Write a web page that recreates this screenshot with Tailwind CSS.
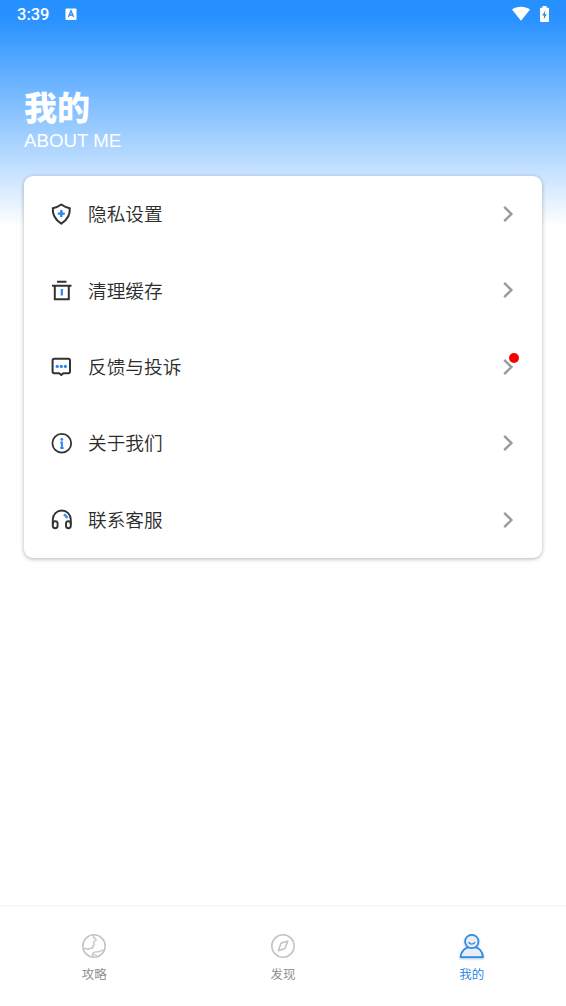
<!DOCTYPE html>
<html lang="zh-CN">
<head>
<meta charset="utf-8">
<title>我的</title>
<script src="https://cdn.jsdelivr.net/npm/@tailwindcss/browser@4"></script>
</head>
<body class="bg-white">
<div class="flex h-[1006px] w-[566px] flex-col overflow-hidden bg-[linear-gradient(to_bottom,#248fff_0px,#2a92ff_20px,#ffffff_227px)] font-['Noto_Sans_CJK_SC',sans-serif]">
  <header class="flex h-[30px] shrink-0 items-center pr-4 pl-[17px] text-white">
    <span class="w-12 font-[Roboto,sans-serif] text-[16.5px] leading-[30px] font-medium">3:39</span>
    <svg class="mb-0.5" width="12" height="12" viewBox="0 0 12 12"><rect x=".5" y=".5" width="11" height="11.5" rx="1" fill="#fff"/><path d="M3.4 9 6 2.8 8.6 9M4.3 7h3.4" fill="none" stroke="#2d8bea" stroke-width="1.3"/></svg>
    <svg class="mr-2 mb-1 ml-auto" width="20" height="16" viewBox="0 0 20 16"><path d="M1 4.5C6 .9 14 .9 19 4.5L10 15.8Z" fill="#fff"/></svg>
    <svg class="mb-0.5" width="11" height="16" viewBox="0 0 11 16"><path d="M3.5 0h4v1.8H9q1 0 1 1V15q0 1-1 1H2q-1 0-1-1V2.800q0-1 1-1h1.500Z" fill="#fff"/><path d="M6.300 4.500 3.200 9.500h2L4.700 13.500 7.900 8.300h-2Z" fill="#2d8bea"/></svg>
  </header>
  <div class="flex h-[146px] shrink-0 flex-col px-6 pt-[57px] text-white">
    <h1 class="h-[41px] text-[33px] leading-[38px] font-black">我的</h1>
    <p class="font-['Liberation_Sans',sans-serif] text-[18.7px] leading-[25px]">ABOUT ME</p>
  </div>
  <main class="mx-6 flex h-[382px] shrink-0 flex-col rounded-[9px] bg-white text-[18.700px] font-[350] text-[#2c2c2c] shadow-[0_1px_4px_rgba(0,0,0,0.3)]">
    <div class="flex flex-1 items-center pr-[26px] pl-[25px]">
      <svg class="mr-[14px]" width="25" height="25" viewBox="0 0 25 25" fill="none" stroke="#333" stroke-width="2" stroke-linejoin="round"><path d="M12.300 2.500Q8.500 5.300 3.800 6.200C3.400 12.500 6.500 18 12.300 21.700C18.100 18 21.200 12.500 20.800 6.200Q16.100 5.300 12.300 2.500Z"/><path d="M12.300 8.100v7M8.800 11.600h7" stroke="#2787f5" stroke-width="2.400"/></svg>
      <span class="flex-1 pb-[3px]">隐私设置</span>
      <svg width="16" height="20" viewBox="0 0 16 20" fill="none" stroke="#999" stroke-width="2.400"><path d="m4.200 2.900 7.200 7.100-7.200 7.100"/></svg>
    </div>
    <div class="flex flex-1 items-center pr-[26px] pl-[25px]">
      <svg class="mr-[14px]" width="25" height="25" viewBox="0 0 25 25" fill="none" stroke="#333" stroke-width="2"><path d="M8 3.800h9.500M3 7.800h19.500M5.800 7.800v13.500H19.800V7.800"/><path d="M12.800 11v6.500" stroke="#2787f5" stroke-width="2.200"/></svg>
      <span class="flex-1 pb-[2px]">清理缓存</span>
      <svg class="mb-px" width="16" height="20" viewBox="0 0 16 20" fill="none" stroke="#999" stroke-width="2.400"><path d="m4.200 2.900 7.200 7.100-7.200 7.100"/></svg>
    </div>
    <div class="flex flex-1 items-center pr-[26px] pl-[25px]">
      <svg class="mr-[14px]" width="25" height="25" viewBox="0 0 25 25" fill="none" stroke="#333" stroke-width="2" stroke-linejoin="round"><path d="M5.300 3.800h14q1.700 0 1.700 1.700v11q0 1.700-1.700 1.700h-4.900L12.300 20.100l-2.100-1.900H5.300Q3.600 18.200 3.600 16.500V5.500q0-1.700 1.700-1.700Z"/><g fill="#2787f5" stroke="none"><circle cx="8.200" cy="11.400" r="1.600"/><circle cx="12.300" cy="11.400" r="1.600"/><circle cx="16.400" cy="11.400" r="1.600"/></g></svg>
      <span class="flex-1 pb-[1px]">反馈与投诉</span>
      <div class="relative">
        <svg width="16" height="20" viewBox="0 0 16 20" fill="none" stroke="#999" stroke-width="2.400"><path d="m4.200 2.900 7.200 7.100-7.200 7.100"/></svg>
        <span class="absolute -top-[4px] left-[9px] size-[10px] rounded-full bg-[#f70000]"></span>
      </div>
    </div>
    <div class="flex flex-1 items-center pr-[26px] pl-[25px]">
      <svg class="mr-[14px]" width="25" height="25" viewBox="0 0 25 25" fill="none"><circle cx="12.800" cy="12.300" r="9.400" stroke="#333" stroke-width="1.800"/><circle cx="12.800" cy="8.400" r="1.400" fill="#2787f5"/><path d="M11.300 11.600h1.600v5.600M11.300 17.100h3.300" stroke="#2787f5" stroke-width="2"/></svg>
      <span class="flex-1 pb-[2px]">关于我们</span>
      <svg width="16" height="20" viewBox="0 0 16 20" fill="none" stroke="#999" stroke-width="2.400"><path d="m4.200 2.900 7.200 7.100-7.200 7.100"/></svg>
    </div>
    <div class="flex flex-1 items-center pr-[26px] pl-[25px]">
      <svg class="mr-[14px]" width="25" height="25" viewBox="0 0 25 25" fill="none" stroke="#333" stroke-width="1.900"><path d="M3.800 17.500V12.500a9 9 0 0 1 18 0v5"/><rect x="3.800" y="14.200" width="4.800" height="7" rx="2.400"/><rect x="17" y="14.200" width="4.800" height="7" rx="2.400"/><path d="M14.800 7.500Q17.300 8.600 18.400 11.300" stroke="#4a96ea" stroke-width="2.600"/></svg>
      <span class="flex-1 pb-[1px]">联系客服</span>
      <svg width="16" height="20" viewBox="0 0 16 20" fill="none" stroke="#999" stroke-width="2.400"><path d="m4.200 2.900 7.200 7.100-7.200 7.100"/></svg>
    </div>
  </main>
  <nav class="mt-auto grid h-[101px] shrink-0 grid-cols-3 border-t-2 border-[#f7f7f7] bg-white pt-[25px] text-[12.500px] leading-[18px] font-[350] text-[#888]">
    <div class="flex flex-col items-center gap-[5px]">
      <svg width="28" height="28" viewBox="0 0 28 28" fill="none" stroke="#c4c4c4" stroke-width="1.300" stroke-linejoin="round"><circle cx="14" cy="14" r="11.200" stroke-width="1.600"/><path d="M13.500 3v2.800q3 .3 2.500 2.500-2.300.6-2.500 2 1.300 1 .6 2.500l-1.300.8.200 2.400-4.300.6-.7 1.300-1.500-1.500-3.500.4M12.300 25l.4-3.600q1-1.700 4-1.500 3 .3 4.500-1.300l2.300-.8M12.500 22.800q3-.6 4.500.7"/></svg>
      <span>攻略</span>
    </div>
    <div class="flex flex-col items-center gap-[5px]">
      <svg width="28" height="28" viewBox="0 0 28 28" fill="none" stroke="#c4c4c4" stroke-width="1.600"><circle cx="14" cy="14" r="11.200"/><path d="M18.800 9 12 11.300 9.300 18.800 16 16.500Z" stroke-linejoin="round"/></svg>
      <span>发现</span>
    </div>
    <div class="flex flex-col items-center gap-[5px] text-[#2080e3]">
      <svg class="drop-shadow-[0_1px_1px_rgba(0,60,140,0.3)]" width="28" height="28" viewBox="0 0 28 28" fill="#e9eef5" stroke="#2d8ae5" stroke-width="1.700" stroke-linejoin="round"><path d="M2.600 25.200C2.900 19.500 7 14.800 14 14.800S24.700 19.500 25 25.200Z"/><circle cx="13.800" cy="9.500" r="6.700"/><path d="M10.500 10.300Q13.800 13.900 17.100 10.300" fill="none" stroke-width="1.400"/></svg>
      <span>我的</span>
    </div>
  </nav>
</div>
</body>
</html>
